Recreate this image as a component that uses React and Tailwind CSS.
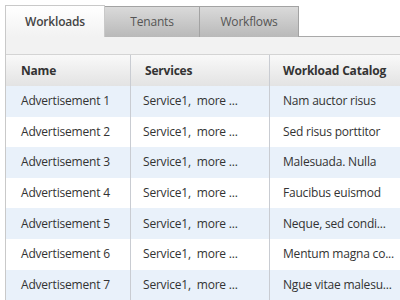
import React from 'react';

const rows = [
    ['Advertisement 1', 'Nam auctor risus'],
    ['Advertisement 2', 'Sed risus porttitor'],
    ['Advertisement 3', 'Malesuada. Nulla'],
    ['Advertisement 4', 'Faucibus euismod'],
    ['Advertisement 5', 'Neque, sed condi...'],
    ['Advertisement 6', 'Mentum magna co...'],
    ['Advertisement 7', 'Ngue vitae malesu...'],
];

const App = () => {
    return (
        <div className="w-[400px] h-[300px] overflow-hidden bg-white pt-[5px] pl-[5px] text-[12px] tracking-[-0.2px] text-[#333] font-['Open_Sans',sans-serif]">
            <div className="flex h-[32px] items-start">
                <div className="w-[100px] h-[32px] border-l border-t border-r border-[#c9c9c9] bg-gradient-to-b from-white to-[#f2f2f2] flex items-center justify-center font-semibold text-[#444]">
                    Workloads
                </div>
                <div className="flex-1 h-[32px] flex border-b border-[#a9a9a9]">
                    <div className="w-[95px] h-[31px] mt-[1px] border-t border-r border-[#a3a3a3] bg-gradient-to-b from-[#dadada] to-[#b9b9b9] flex items-center justify-center text-[#555]">
                        Tenants
                    </div>
                    <div className="w-[99px] h-[31px] mt-[1px] border-t border-r border-[#a3a3a3] bg-gradient-to-b from-[#dadada] to-[#b9b9b9] flex items-center justify-center text-[#555]">
                        Workflows
                    </div>
                </div>
            </div>
            <div className="border-l border-[#c9c9c9]">
                <div className="h-[18px] bg-[#f2f2f2] border-b border-[#d4d4d4]" />
                <div className="flex h-[31px] bg-gradient-to-b from-[#f9f9f9] to-[#e3e3e3] font-bold text-[#333]">
                    <div className="w-[125px] border-r border-[#c9ccd2] pl-[15px] flex items-center">Name</div>
                    <div className="w-[139px] border-r border-[#c9ccd2] pl-[14px] flex items-center">Services</div>
                    <div className="flex-1 pl-[13px] flex items-center">Workload Catalog</div>
                </div>
                {rows.map((r, i) => (
                    <div
                        key={i}
                        className={`flex h-[30.6px] ${i % 2 === 0 ? 'bg-[#e9f1fa]' : 'bg-white'}`}
                    >
                        <div className="w-[125px] border-r border-[#c9ccd2] pl-[15px] flex items-center">{r[0]}</div>
                        <div className="w-[139px] border-r border-[#c9ccd2] pl-[12px] flex items-center whitespace-pre">Service1,  more ...</div>
                        <div className="flex-1 pl-[13px] flex items-center whitespace-nowrap">{r[1]}</div>
                    </div>
                ))}
            </div>
        </div>
    );
};

export default App;
